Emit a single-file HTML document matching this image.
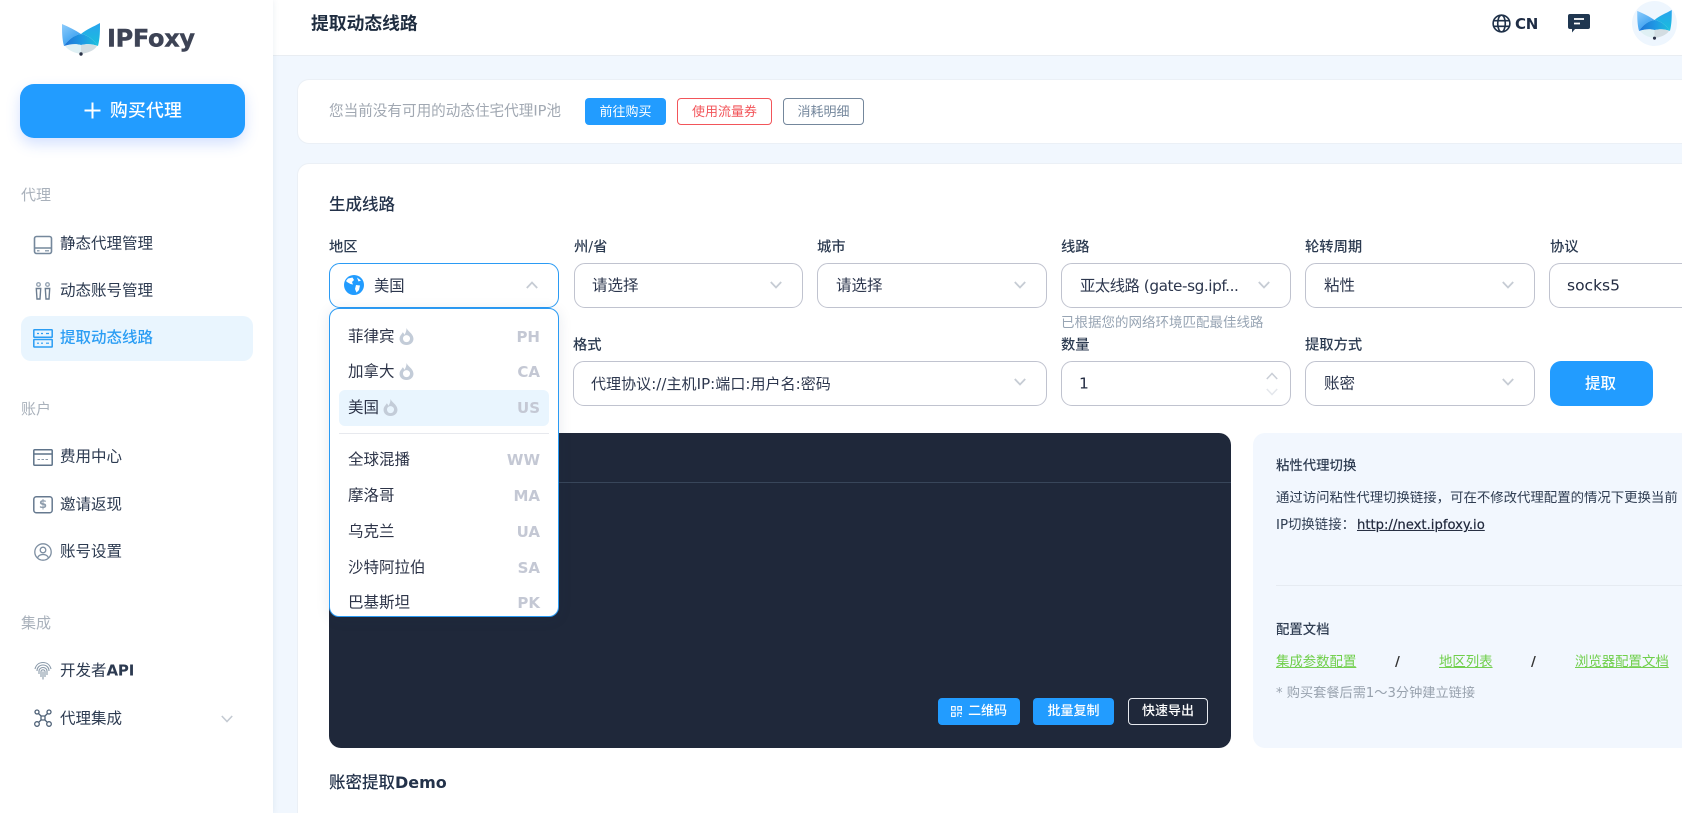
<!DOCTYPE html>
<html lang="zh-CN"><head><meta charset="utf-8"><title>提取动态线路</title>
<style>
*{box-sizing:border-box}
html,body{margin:0;padding:0;width:1682px;height:813px;overflow:hidden;background:#f1f7fe;font-family:"DejaVu Sans","Noto Sans CJK SC",sans-serif;color:#2c3a50}
#root{position:absolute;left:0;top:0;width:1682px;height:813px;overflow:hidden;background:#f1f7fe}
.a{position:absolute}
.t{position:absolute;white-space:nowrap;transform:translateY(calc(-50% + 1px));line-height:1.2}
#side{left:0;top:0;width:273px;height:813px;background:#fff;box-shadow:0 0 6px rgba(60,90,130,.10);z-index:3}
#head{left:273px;top:0;width:1409px;height:56px;background:#fff;border-bottom:1px solid #e9edf2;z-index:2}
.card{background:#fff;border:1px solid #ebf0f6;border-right:none;border-radius:12px 0 0 12px}
.s{font-size:15.5px;color:#2c3a50}
.lab{font-size:14.3px;color:#2b3a50;font-weight:500}
.sel{position:absolute;height:45px;width:229.5px;background:#fff;border:1px solid #c0c3cf;border-radius:11px}
.v{font-size:15.5px;color:#2d374e}
.btn{position:absolute;border-radius:4px;font-size:13px;text-align:center;line-height:27px;height:27px}
.sec{font-size:15px;color:#a9b1bb}
.dd{font-size:15.5px;color:#2d3448}
.cd{font-size:15px;font-weight:700;color:#c4c8d4;text-align:right}
.g{font-size:13.4px;color:#2f3d52}
.lk{font-size:13.4px;color:#6fcf4a;text-decoration:underline}
svg{position:absolute;overflow:visible}
</style></head><body>
<div id="root">
<svg width="0" height="0" style="position:absolute"><defs>
<linearGradient id="g1" x1="0" y1="0" x2="0.6" y2="1"><stop offset="0" stop-color="#8fccfb"/><stop offset="1" stop-color="#2f9bf0"/></linearGradient>
<linearGradient id="g2" x1="0" y1="0" x2="1" y2="0"><stop offset="0" stop-color="#1f74d6"/><stop offset=".55" stop-color="#1f9ae4"/><stop offset="1" stop-color="#1cc0dc"/></linearGradient>
<linearGradient id="g3" x1="0" y1="0" x2="0" y2="1"><stop offset="0" stop-color="#2aa3ee"/><stop offset="1" stop-color="#17bfdc"/></linearGradient>
<symbol id="fox" viewBox="0 0 40 33">
<path d="M1 1C8 4 14 7 20 11C13 12 7 17 3 23C1 16 1 8 1 1z" fill="url(#g1)"/>
<path d="M39 0C39 8 39 15 37 23C33 17 27 12 20 11C26 6 32 4 39 0z" fill="url(#g3)"/>
<path d="M20 11C13 12 7 17 3 23C9 21 15 20.500 20 22C26 20.500 32 21 37 23C33 17 27 12 20 11z" fill="url(#g2)"/>
<path d="M4 23C10 21 16 21 20 22L20 31C14 30 8 28 4 23z" fill="#dff0f4"/>
<path d="M20 22C26 21 32 21 36 23C33 28 26 30 20 31z" fill="#d3dde2"/>
<circle cx="20" cy="31" r="1.700" fill="#2b3348"/>
</symbol>
</defs></svg>

<div id="side" class="a">
<svg style="left:61px;top:23px" width="40" height="33"><use href="#fox"/></svg>
<div class="t" style="left:107px;top:38px;font-family:'DejaVu Sans',sans-serif;font-weight:700;font-size:24px;letter-spacing:-.3px;color:#3d4355;-webkit-text-stroke:.4px #3d4355">IPFoxy</div>
<div class="a" style="left:20px;top:84px;width:225px;height:54px;border-radius:14px;background:#229cff;box-shadow:0 6px 14px rgba(60,120,255,.22)"></div>
<svg style="left:84px;top:101px" width="17" height="19" viewBox="0 0 17 19"><path d="M8.500 1.500V17.500M.5 9.500H16.500" stroke="#fff" stroke-width="2"/></svg>
<div class="t" style="left:110px;top:110px;font-size:17.800px;font-weight:500;color:#fff;letter-spacing:.2px">购买代理</div>

<div class="t sec" style="left:21px;top:194px">代理</div>
<svg style="left:33px;top:235px" width="20" height="20" viewBox="0 0 20 20" fill="none" stroke="#75889c" stroke-width="1.600"><rect x="1.500" y="1.500" width="17" height="17" rx="2"/><path d="M1.500 13H18.500" /><path d="M4 15.800H6.500M12 15.800H16" stroke-width="1.200"/></svg>
<div class="t s" style="left:60px;top:243px">静态代理管理</div>
<svg style="left:35px;top:282px" width="16" height="18" viewBox="0 0 16 18" fill="none" stroke="#6c7d90" stroke-width="1.400"><circle cx="3.500" cy="2.500" r="1.800" stroke="#98a6b5"/><circle cx="12.500" cy="2.500" r="1.800" stroke="#98a6b5"/><path d="M1.300 6.500H5.700L5 17H2zM10.300 6.500H14.700L14 17H11z"/></svg>
<div class="t s" style="left:60px;top:290px">动态账号管理</div>
<div class="a" style="left:21px;top:316px;width:232px;height:45px;border-radius:10px;background:#e9f5fe"></div>
<svg style="left:33px;top:329px" width="20" height="19" viewBox="0 0 20 19" fill="none" stroke="#2a9df4" stroke-width="1.500"><rect x=".8" y=".8" width="18.400" height="7.500" rx=".5"/><rect x=".8" y="10.500" width="18.400" height="7.500" rx=".5"/><path d="M4 4.500H6M8 4.500H10M13 4.500H16M4 14.200H6M8 14.200H10M13 14.200H16" stroke-width="1.200"/></svg>
<div class="t s" style="left:60px;top:337px;color:#2a9df4;font-weight:500">提取动态线路</div>

<div class="t sec" style="left:21px;top:408px">账户</div>
<svg style="left:33px;top:449px" width="20" height="17" viewBox="0 0 20 17" fill="none" stroke="#5f7389" stroke-width="1.500"><rect x=".8" y=".8" width="18.400" height="15.400" rx="1"/><path d="M.8 5H19.200"/><path d="M4.500 10.500H7M8.500 10.500H11M12.500 10.500H15" stroke-width="1" stroke="#8b99a8"/></svg>
<div class="t s" style="left:60px;top:456px">费用中心</div>
<svg style="left:33px;top:496px" width="20" height="18" viewBox="0 0 20 18" fill="none" stroke="#66798f" stroke-width="1.500"><rect x=".8" y=".8" width="18.400" height="15.900" rx="2.500"/></svg>
<div class="t" style="left:39px;top:504px;font-size:11.500px;font-weight:700;color:#8d9cac">$</div>
<div class="t s" style="left:60px;top:504px">邀请返现</div>
<svg style="left:34px;top:543px" width="18" height="18" viewBox="0 0 18 18" fill="none" stroke="#7d8ea1" stroke-width="1.300"><circle cx="9" cy="9" r="8.200"/><circle cx="9" cy="7" r="2.800"/><path d="M3.500 15C4.500 12 7 11.500 9 11.500S13.500 12 14.500 15"/></svg>
<div class="t s" style="left:60px;top:551px">账号设置</div>

<div class="t sec" style="left:21px;top:622px">集成</div>
<svg style="left:34px;top:661px" width="18" height="19" viewBox="0 0 18 19" fill="none" stroke="#8a9aaa" stroke-width="1.100"><path d="M1 8C2 4 5 1.500 9 1.500S16 4 17 8"/><path d="M3 10C3 6.500 5.500 4 9 4S15 6.500 15 10"/><path d="M5 13V10C5 8 6.800 6.500 9 6.500S13 8 13 10V14"/><path d="M7 16V10.500C7 9.500 8 8.800 9 8.800S11 9.500 11 10.500V16"/><path d="M9 10.500V18.500"/></svg>
<div class="t s" style="left:60px;top:670px">开发者<span style="font-weight:700;font-size:15px;letter-spacing:-.2px">API</span></div>
<svg style="left:34px;top:709px" width="18" height="18" viewBox="0 0 18 18" fill="none" stroke="#4d6076" stroke-width="1.300"><circle cx="3" cy="3" r="2"/><circle cx="15" cy="3" r="2"/><circle cx="3" cy="15" r="2.300"/><circle cx="15" cy="15" r="2.300"/><path d="M4.500 4.500L7 7H11L13.500 4.500M7 7V11M11 7V11M4.800 13.200L7 11H11L13.200 13.200"/></svg>
<div class="t s" style="left:60px;top:718px">代理集成</div>
<svg style="left:221px;top:715px" width="12" height="8" viewBox="0 0 12 8" fill="none" stroke="#c4cad2" stroke-width="1.600"><path d="M.8 1L6 6.500L11.200 1"/></svg>
</div>

<div id="head" class="a">
<div class="t" style="left:38px;top:23px;font-size:17.800px;font-weight:700;color:#1f2d40">提取动态线路</div>
</div>
<div class="a" style="left:0;top:0;z-index:2;width:1682px;height:56px;pointer-events:none">
<svg style="left:1491.500px;top:13.500px" width="19" height="19" viewBox="0 0 20 20" fill="none" stroke="#1f3149" stroke-width="1.700"><circle cx="10" cy="10" r="8.800"/><ellipse cx="10" cy="10" rx="4" ry="8.800"/><path d="M2 7H18M2 13H18"/></svg>
<div class="t" style="left:1515px;top:23px;font-size:15px;font-weight:700;color:#1f2d45;letter-spacing:-.3px">CN</div>
<svg style="left:1568px;top:14px" width="22" height="19" viewBox="0 0 22 19"><path d="M2 0H20Q22 0 22 2V13Q22 15 20 15H7L4 18.500V15H2Q0 15 0 13V2Q0 0 2 0z" fill="#1f3650"/><path d="M6 5H16M6 9.500H12" stroke="#fff" stroke-width="1.700"/></svg>
<div class="a" style="left:1632px;top:1px;width:45px;height:45px;border-radius:50%;background:#eef6fe"></div>
<svg style="left:1636px;top:10px" width="37" height="30"><use href="#fox"/></svg>
</div>

<div class="a card" style="left:297px;top:79px;width:1385px;height:65px"></div>
<div class="t" style="left:329px;top:110px;font-size:14.600px;color:#a1a8b2">您当前没有可用的动态住宅代理IP池</div>
<div class="btn" style="left:585px;top:98px;width:81px;background:#229cff;color:#fff;line-height:29px">前往购买</div>
<div class="btn" style="left:677px;top:98px;width:95px;border:1px solid #f2555a;color:#f2555a;background:#fff">使用流量券</div>
<div class="btn" style="left:783px;top:98px;width:81px;border:1px solid #74879c;color:#74879c;background:#fff">消耗明细</div>

<div class="a card" style="left:297px;top:163px;width:1385px;height:650px;border-bottom:none;border-radius:12px 0 0 0"></div>
<div class="t" style="left:329px;top:204px;font-size:16.500px;font-weight:500;color:#23324a">生成线路</div>

<div class="t lab" style="left:329px;top:247px">地区</div>
<div class="t lab" style="left:574px;top:247px">州/省</div>
<div class="t lab" style="left:817px;top:247px">城市</div>
<div class="t lab" style="left:1061px;top:247px">线路</div>
<div class="t lab" style="left:1305px;top:247px">轮转周期</div>
<div class="t lab" style="left:1550px;top:247px">协议</div>

<div class="sel" style="left:329px;top:263px;border-color:#2b9bf4"></div>
<svg style="left:344px;top:275px" width="20" height="20" viewBox="0 0 20 20"><circle cx="10" cy="10" r="10" fill="#229cff"/><path d="M4 3.500L8.500 2.500L10 5L8 7L9 9.500L6.500 9L3 7L2 6zM12 10L16 10.500L15 15L12.500 17.500L11 14zM13 2.500L17 5.500L14.500 6.500z" fill="#fff"/></svg>
<div class="t v" style="left:374px;top:285px;font-size:15.300px">美国</div>
<svg style="left:526px;top:281px" width="12" height="8" viewBox="0 0 12 8" fill="none" stroke="#c6ccd4" stroke-width="1.800"><path d="M.8 7L6 1.500L11.200 7"/></svg>

<div class="sel" style="left:573.500px;top:263px"></div>
<div class="t v" style="left:592px;top:285px">请选择</div>
<svg style="left:770px;top:281px" width="12" height="8" viewBox="0 0 12 8" fill="none" stroke="#c6ccd4" stroke-width="1.800"><path d="M.8 1L6 6.500L11.200 1"/></svg>

<div class="sel" style="left:817px;top:263px"></div>
<div class="t v" style="left:836px;top:285px">请选择</div>
<svg style="left:1014px;top:281px" width="12" height="8" viewBox="0 0 12 8" fill="none" stroke="#c6ccd4" stroke-width="1.800"><path d="M.8 1L6 6.500L11.200 1"/></svg>

<div class="sel" style="left:1061px;top:263px"></div>
<div class="t v" style="left:1080px;top:285px;font-size:15.300px;letter-spacing:-.45px">亚太线路 (gate-sg.ipf...</div>
<svg style="left:1258px;top:281px" width="12" height="8" viewBox="0 0 12 8" fill="none" stroke="#c6ccd4" stroke-width="1.800"><path d="M.8 1L6 6.500L11.200 1"/></svg>

<div class="sel" style="left:1305px;top:263px"></div>
<div class="t v" style="left:1324px;top:285px">粘性</div>
<svg style="left:1502px;top:281px" width="12" height="8" viewBox="0 0 12 8" fill="none" stroke="#c6ccd4" stroke-width="1.800"><path d="M.8 1L6 6.500L11.200 1"/></svg>

<div class="sel" style="left:1549px;top:263px;width:133px;border-right:none;border-radius:11px 0 0 11px"></div>
<div class="t v" style="left:1567px;top:285px;color:#232c42">socks5</div>

<div class="t" style="left:1061px;top:322px;font-size:13.500px;color:#98a5b4">已根据您的网络环境匹配最佳线路</div>

<div class="t lab" style="left:573px;top:345px">格式</div>
<div class="t lab" style="left:1061px;top:345px">数量</div>
<div class="t lab" style="left:1305px;top:345px">提取方式</div>

<div class="sel" style="left:573px;top:361px;width:474px"></div>
<div class="t v" style="left:591px;top:383px;font-size:15px;letter-spacing:.05px">代理协议://主机IP:端口:用户名:密码</div>
<svg style="left:1014px;top:378px" width="12" height="8" viewBox="0 0 12 8" fill="none" stroke="#c6ccd4" stroke-width="1.800"><path d="M.8 1L6 6.500L11.200 1"/></svg>

<div class="sel" style="left:1061px;top:361px"></div>
<div class="t v" style="left:1079px;top:383px;color:#232c42">1</div>
<svg style="left:1266px;top:372px" width="12" height="8" viewBox="0 0 12 8" fill="none" stroke="#c9ced6" stroke-width="1.500"><path d="M.8 7L6 1.500L11.200 7"/></svg>
<svg style="left:1266px;top:388px" width="12" height="8" viewBox="0 0 12 8" fill="none" stroke="#e4e7ec" stroke-width="1.500"><path d="M.8 1L6 6.500L11.200 1"/></svg>

<div class="sel" style="left:1305px;top:361px"></div>
<div class="t v" style="left:1324px;top:383px">账密</div>
<svg style="left:1502px;top:378px" width="12" height="8" viewBox="0 0 12 8" fill="none" stroke="#c6ccd4" stroke-width="1.800"><path d="M.8 1L6 6.500L11.200 1"/></svg>

<div class="a" style="left:1550px;top:361px;width:103px;height:45px;border-radius:11px;background:#229cff"></div>
<div class="t" style="left:1585px;top:383px;font-size:15.500px;font-weight:500;color:#fff">提取</div>

<!-- dark box -->
<div class="a" style="left:329px;top:433px;width:902px;height:315px;border-radius:12px;background:#1f283a"></div>
<div class="a" style="left:329px;top:482px;width:902px;height:1px;background:#38465a"></div>
<div class="btn" style="left:938px;top:698px;width:82px;background:#229cff;color:#fff;line-height:28px;padding-left:17px;font-weight:500;letter-spacing:-.1px">二维码</div>
<svg style="left:951px;top:706px" width="11" height="11" viewBox="0 0 11 11" fill="none" stroke="#fff" stroke-width="1.100"><rect x=".6" y=".6" width="3.600" height="3.600"/><rect x="6.800" y=".6" width="3.600" height="3.600"/><rect x=".6" y="6.800" width="3.600" height="3.600"/><path d="M6.800 10.500V6.800H10.400V8.500M9 10.500H10.500"/></svg>
<div class="btn" style="left:1033px;top:698px;width:81px;background:#229cff;color:#fff;line-height:28px;font-weight:500">批量复制</div>
<div class="btn" style="left:1128px;top:698px;width:80px;border:1px solid #e6e9ee;color:#fff;line-height:26px;font-weight:500">快速导出</div>

<!-- right panel -->
<div class="a" style="left:1253px;top:433px;width:429px;height:315px;border-radius:12px 0 0 12px;background:#f2f7fe"></div>
<div class="t g" style="left:1276px;top:466px;font-weight:500">粘性代理切换</div>
<div class="t g" style="left:1276px;top:498px;width:406px;overflow:hidden">通过访问粘性代理切换链接，可在不修改代理配置的情况下更换当前</div>
<div class="t g" style="left:1276px;top:525px">IP切换链接：<span style="color:#20283c;text-decoration:underline;font-size:13.200px;margin-left:2px;-webkit-text-stroke:.2px #20283c">http://next.ipfoxy.io</span></div>
<div class="a" style="left:1276px;top:585px;width:406px;height:1px;background:#e6ebf2"></div>
<div class="t g" style="left:1276px;top:630px;font-weight:500">配置文档</div>
<div class="t lk" style="left:1276px;top:662px">集成参数配置</div>
<div class="t g" style="left:1395px;top:662px;color:#333;font-weight:700">/</div>
<div class="t lk" style="left:1439px;top:662px">地区列表</div>
<div class="t g" style="left:1531px;top:662px;color:#333;font-weight:700">/</div>
<div class="t lk" style="left:1575px;top:662px">浏览器配置文档</div>
<div class="t" style="left:1276px;top:693px;font-size:13.200px;color:#98a2ae">* 购买套餐后需1～3分钟建立链接</div>

<div class="t" style="left:329px;top:782px;font-size:16.500px;font-weight:500;color:#23324a">账密提取<span style="font-weight:700;font-size:16px">Demo</span></div>

<!-- dropdown -->
<div class="a" style="left:329px;top:307.500px;width:230px;height:309.500px;background:#fff;border:1px solid #2b9bf4;border-radius:10px;box-shadow:0 2px 14px rgba(30,50,90,.10);overflow:hidden">
<div class="a" style="left:9px;top:81px;width:210px;height:36px;border-radius:6px;background:#e9f5fe"></div>
<div class="a" style="left:9px;top:124px;width:210px;height:1px;background:#e7e9ee"></div>
<div class="t dd" style="left:18px;top:27px">菲律宾</div>
<div class="t dd" style="left:18px;top:62px">加拿大</div>
<div class="t dd" style="left:18px;top:98px">美国</div>
<div class="t dd" style="left:18px;top:150px">全球混播</div>
<div class="t dd" style="left:18px;top:186px">摩洛哥</div>
<div class="t dd" style="left:18px;top:222px">乌克兰</div>
<div class="t dd" style="left:18px;top:258px">沙特阿拉伯</div>
<div class="t dd" style="left:18px;top:293px">巴基斯坦</div>
<svg style="left:69px;top:19px" width="15" height="17" viewBox="0 0 14 16"><path d="M7 0C8 3 13 5 13.500 9.500C14 13 11 16 7 16S0 13 .5 9.500C.8 7 2.500 6 3.500 4C4.500 5 4.800 5.800 5 6.500C6 5 7 3 7 0z" fill="#c3ccd8"/><circle cx="7" cy="10" r="3.300" fill="#fff"/></svg>
<svg style="left:69px;top:54px" width="15" height="17" viewBox="0 0 14 16"><path d="M7 0C8 3 13 5 13.500 9.500C14 13 11 16 7 16S0 13 .5 9.500C.8 7 2.500 6 3.500 4C4.500 5 4.800 5.800 5 6.500C6 5 7 3 7 0z" fill="#c3ccd8"/><circle cx="7" cy="10" r="3.300" fill="#fff"/></svg>
<svg style="left:53px;top:90px" width="15" height="17" viewBox="0 0 14 16"><path d="M7 0C8 3 13 5 13.500 9.500C14 13 11 16 7 16S0 13 .5 9.500C.8 7 2.500 6 3.500 4C4.500 5 4.800 5.800 5 6.500C6 5 7 3 7 0z" fill="#c3ccd8"/><circle cx="7" cy="10" r="3.300" fill="#e9f5fe"/></svg>
<div class="t cd" style="right:18px;top:27px">PH</div>
<div class="t cd" style="right:18px;top:62px">CA</div>
<div class="t cd" style="right:18px;top:98px">US</div>
<div class="t cd" style="right:18px;top:150px">WW</div>
<div class="t cd" style="right:18px;top:186px">MA</div>
<div class="t cd" style="right:18px;top:222px">UA</div>
<div class="t cd" style="right:18px;top:258px">SA</div>
<div class="t cd" style="right:18px;top:293px">PK</div>
</div>
</div>
</body></html>
